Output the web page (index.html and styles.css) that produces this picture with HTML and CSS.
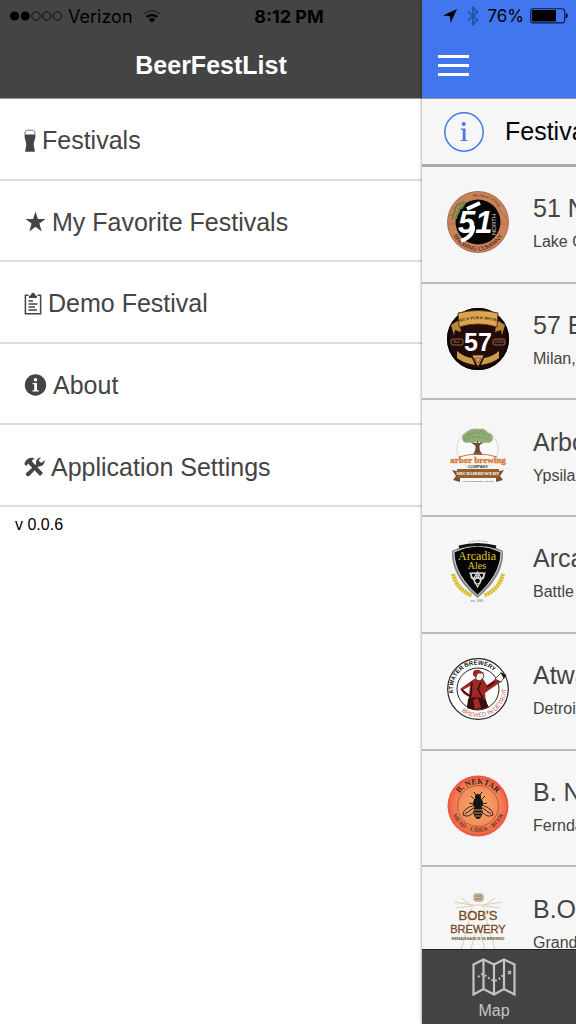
FILE: index.html
```
<!DOCTYPE html>
<html lang="en">
<head>
    <meta charset="utf-8">
    <meta name="viewport" content="width=device-width, initial-scale=1">
    <title>BeerFestList</title>
    <link rel="stylesheet" href="styles.css">
</head>

<body>
    <!-- status bar, lies over both headers -->
    <div class="status">
        <div class="status-left">
            <svg width="52" height="12" viewBox="0 0 52 12">
                <circle cx="4.500" cy="6" r="4.500"/>
                <circle cx="15.200" cy="6" r="4.500"/>
                <g fill="none" stroke="#000" stroke-width="0.800">
                    <circle cx="26" cy="6" r="4.200"/>
                    <circle cx="36.700" cy="6" r="4.200"/>
                    <circle cx="47.400" cy="6" r="4.200"/>
                </g>
            </svg>
            <span class="carrier">Verizon</span>
            <svg class="wifi" width="18" height="14" viewBox="0 0 18 14">
                <g fill="none" stroke="#000" stroke-width="2.300">
                    <path d="M1 5.200A11.500 11.500 0 0 1 17 5.200" opacity="0.350"/>
                    <path d="M3.800 8.200A7.600 7.600 0 0 1 14.200 8.200"/>
                </g>
                <path d="M9 13.800L5.700 10.400A4.800 4.800 0 0 1 12.300 10.400Z"/>
            </svg>
        </div>
        <div class="clock">8:12 PM</div>
        <div class="status-right">
            <svg width="14" height="14" viewBox="0 0 14 14"><path d="M14 0L7.600 14L7 7.200L0 6.400Z"/></svg>
            <svg class="bluetooth" width="12" height="20" viewBox="0 0 12 20"><path d="M1 5.500L10.500 14L6 18.500V1.500L10.500 6L1 14.500" fill="none" stroke="#234f9b" stroke-width="1.600"/></svg>
            <span class="percent">76%</span>
            <svg width="38" height="16" viewBox="0 0 38 16">
                <rect x="0.700" y="0.700" width="34" height="14.200" rx="2.500" fill="none" stroke="#0b1b40" stroke-width="1.100"/>
                <rect x="2" y="2" width="24" height="11.600" rx="1"/>
                <path d="M35.700 5C38.300 5.500 38.300 10 35.700 10.500Z"/>
            </svg>
        </div>
    </div>

    <div class="app">
        <!-- side menu -->
        <aside class="menu">
            <header class="bar bar-dark">
                <h1>BeerFestList</h1>
            </header>
            <nav class="menu-list">
                <a href="#festivals">
                    <svg width="12" height="24" viewBox="0 0 12 24">
                        <path d="M1 5.500C1 1 2 1.200 6 1.200S11 1 11 5.500" fill="none" stroke="#666" stroke-width="1"/>
                        <path d="M0.600 5.500H11.400C11.600 11 9.600 12.500 9.800 16C9.900 19 11 20.500 10.800 22.800H1.200C1 20.500 2.100 19 2.200 16C2.400 12.500 0.400 11 0.600 5.500Z"/>
                    </svg>
                    Festivals
                </a>
                <a href="#favorites">
                    <svg width="22" height="22" viewBox="0 0 22 22"><path d="M11.500 0.500L13.900 8H21.500L15.400 12.600L17.700 20.500L11.500 15.800L5.300 20.500L7.600 12.600L1.500 8H9.100Z"/></svg>
                    My Favorite Festivals
                </a>
                <a href="#demo">
                    <svg width="18" height="24" viewBox="0 0 18 24">
                        <path d="M4.500 3.200H1.400V21.800H16.600V3.200H13.500" fill="none" stroke="#444" stroke-width="1.500"/>
                        <path d="M5 6V4L7 3Q7 0.700 9 0.700T11 3L13 4V6Z"/>
                        <path d="M4.500 9H9M4.500 12H13.500M4.500 15H11M4.500 18H13" stroke="#444" stroke-width="1.400"/>
                    </svg>
                    Demo Festival
                </a>
                <a href="#about">
                    <svg width="23" height="23" viewBox="0 0 23 23">
                        <circle cx="11.500" cy="11" r="10.700"/>
                        <g fill="#fff"><circle cx="11.500" cy="5.700" r="1.800"/><path d="M8.500 9H13V16.200H14.800V17.500H8.500V16.200H10.200V10.200H8.500Z"/></g>
                    </svg>
                    About
                </a>
                <a href="#settings">
                    <svg width="21" height="22" viewBox="0 0 21 22">
                        <path d="M8.500 6L19 17L16 20L5.500 9L4 7.500L2.500 10L0.500 8.500C0.500 5 4 1.300 9 1.800L10.500 3L8 4.300Z"/>
                        <path d="M2 17.300L12 8.500C11.500 4.500 13.500 1.500 17 1.500L14.800 4L16 6.500L18.600 6.300L20.500 4C21.200 8 18 11 14.200 10.500L5 20.300C3 20.500 1.500 19 2 17.300Z"/>
                    </svg>
                    Application Settings
                </a>
            </nav>
            <p class="version">v 0.0.6</p>
        </aside>

        <!-- page pushed aside by the menu -->
        <main class="page">
            <header class="bar bar-blue">
                <button type="button" class="toggle" aria-label="Menu"><i></i><i></i><i></i></button>
            </header>

            <a class="info" href="#info">
                <svg width="40" height="40" viewBox="0 0 40 40">
                    <circle cx="20" cy="20" r="19.200" fill="none" stroke="#4276ee" stroke-width="1.500"/>
                    <g fill="#4276ee"><circle cx="19.700" cy="12" r="2"/><path d="M16.800 16.600H21.500V28H23.300V29H16.600V28H18.700V17.700H16.800Z"/></g>
                </svg>
                <span>Festival Information</span>
            </a>

            <div class="scroll">
                <ul class="breweries">
                    <li>
                        <svg class="logo" viewBox="0 0 62 62">
                            <circle cx="31" cy="31" r="30.500" fill="#ca8258" stroke="#95613f" stroke-width="0.800"/>
                            <path d="M2 25Q17 20 12 12M50 12Q53 23 60 27M1 33H8M54 33H61" fill="none" stroke="#ab6947" stroke-width="0.800"/>
                            <circle cx="31" cy="31" r="22.500" fill="#050505"/>
                            <path d="M5 29C7 24 5 23 8 20C6 17 10 16 11 13C14 15 14 10 18 12C15 15 17 17 12 18C14 21 9 22 9 28" fill="none" stroke="#678442" stroke-width="2"/>
                            <path id="a1" d="M4 39A28 28 0 0 0 58 39" fill="none"/>
                            <path id="a2" d="M26 6A25.500 25.500 0 0 1 56 25" fill="none"/>
                            <text class="sans" font-size="6" fill="#302018"><textPath href="#a1" startOffset="50%" text-anchor="middle">BREWING COMPANY</textPath></text>
                            <text class="serif italic" font-size="4" fill="#4b2d1c"><textPath href="#a2">Michigan’s Finest</textPath></text>
                            <path d="M26 35Q27 45 14 50" fill="none" stroke="#fff" stroke-width="4"/>
                            <path d="M20 18L33 12" stroke="#fff" stroke-width="4"/>
                            <text class="sans bold italic" x="11" y="42" font-size="31" fill="#fff">51</text>
                            <text class="sans" font-size="6" fill="#ddd" transform="translate(49 44) rotate(-90)">NORTH</text>
                        </svg>
                        <div><h2>51 North Brewing Company</h2><p>Lake Orion, MI</p></div>
                    </li>
                    <li>
                        <svg class="logo" viewBox="0 0 62 62">
                            <circle cx="31" cy="31" r="31" fill="#240b0b"/>
                            <circle cx="31" cy="31" r="30" fill="none" stroke="#080303" stroke-width="2"/>
                            <path d="M4 17L12 12L14 24L8 22L7 27ZM58 17L50 12L48 24L54 22L55 27Z" fill="#b98639"/>
                            <path d="M11 5Q31 0 51 5L50 19Q31 13 12 19Z" fill="#dba64f" stroke="#5f3513" stroke-width="1"/>
                            <path id="b1" d="M12 14Q31 8 51 14" fill="none"/>
                            <text class="serif bold" font-size="4" fill="#3b210d"><textPath href="#b1" startOffset="50%" text-anchor="middle">BREW PUB &amp; BISTRO</textPath></text>
                            <g fill="none" stroke="#936740" stroke-width="1"><rect x="4" y="31" width="12" height="6" rx="2"/><rect x="46" y="31" width="12" height="6" rx="2"/></g>
                            <text class="sans" x="10" y="35" font-size="4" fill="#b18452" text-anchor="middle">Est.</text>
                            <text class="sans" x="52" y="35" font-size="4" fill="#b18452" text-anchor="middle">2009</text>
                            <path d="M10 43Q17 49 25 50L28 57Q16 55 10 50ZM52 43Q45 49 37 50L34 57Q46 55 52 50Z" fill="#cc9b49"/>
                            <path d="M25 47H37L31 59Z" fill="#e0b165" stroke="#43210f" stroke-width="1"/>
                            <path d="M28 50H34L31 55Z" fill="none" stroke="#815024"/>
                            <text class="sans bold" x="31" y="43" font-size="25" fill="#fff" text-anchor="middle">57</text>
                        </svg>
                        <div><h2>57 Brew Pub &amp; Bistro</h2><p>Milan, MI</p></div>
                    </li>
                    <li>
                        <svg class="logo" viewBox="0 0 62 62">
                            <circle cx="30.500" cy="24" r="20.500" fill="#fafafa" stroke="#ccc" stroke-width="0.700"/>
                            <path d="M28 18H33Q31 25 36 30H25Q30 26 28 18Z" fill="#6b4932"/>
                            <path d="M29 20L22 15M31 20L39 15M30 21L31 12" fill="none" stroke="#6b4932" stroke-width="1.600"/>
                            <g fill="#92ad77"><ellipse cx="30" cy="10" rx="12" ry="6"/><circle cx="20" cy="13" r="5"/><circle cx="41" cy="13" r="5"/><circle cx="26" cy="8" r="4"/><circle cx="35" cy="8" r="4"/><ellipse cx="25" cy="15" rx="5" ry="3"/><ellipse cx="36" cy="15" rx="5" ry="3"/></g>
                            <g fill="none" stroke="#66834f" stroke-width="1.200" stroke-dasharray="1 2"><path d="M18 12Q30 4 43 12"/><path d="M17 15Q30 9 43 15"/><path d="M22 9Q30 3 38 8"/></g>
                            <path d="M12 32Q31 26 50 32" fill="none" stroke="#c9773b" stroke-width="1"/>
                            <text class="serif bold" x="31" y="38" font-size="9" fill="#d77b35" stroke="#d77b35" stroke-width="0.400" text-anchor="middle">arbor brewing</text>
                            <text class="sans bold" x="31" y="43" font-size="4" fill="#333" text-anchor="middle">COMPANY</text>
                            <path d="M5 45L13 47V57L6 55L9 51ZM57 45L49 47V57L56 55L53 51Z" fill="#795027"/>
                            <rect x="10" y="44" width="42" height="9" fill="#94612e"/>
                            <text class="serif bold" x="31" y="50" font-size="5" fill="#fff" text-anchor="middle">MICROBREWERY</text>
                            <text class="sans" x="31" y="57" font-size="2" fill="#444" text-anchor="middle">THE MICROBREWERY AND PUB</text>
                        </svg>
                        <div><h2>Arbor Brewing Company</h2><p>Ypsilanti, MI</p></div>
                    </li>
                    <li>
                        <svg class="logo" viewBox="0 0 62 62">
                            <path d="M22 1Q31 -1 41 1" fill="none" stroke="#aaa" stroke-width="1" stroke-dasharray="2 1"/>
                            <path d="M7 35Q10 49 25 55M55 35Q52 49 37 55" fill="none" stroke="#efe08c" stroke-width="4"/>
                            <g fill="none" stroke="#d5b933" stroke-width="4" stroke-dasharray="2 1"><path d="M6 33Q9 47 24 54"/><path d="M56 33Q53 47 38 54"/></g>
                            <path d="M5 10Q18 3 30.500 3T56 10C57 29 46 44 30.500 57C15 44 4 29 5 10Z" fill="#888"/>
                            <path d="M7 11Q19 5 30.500 5T54 11C54 28 44 42 30.500 54C17 42 7 28 7 11Z" fill="#050505" stroke="#fff" stroke-width="0.800"/>
                            <path d="M12 6Q31 1 49 6" fill="none" stroke="#111" stroke-width="3"/>
                            <text class="serif" x="30" y="19" font-size="12" fill="#e1c72e" text-anchor="middle">Arcadia</text>
                            <text class="serif" x="30" y="28" font-size="10" fill="#e1c72e" text-anchor="middle">Ales</text>
                            <g fill="none" stroke="#ddd" stroke-width="1.200"><path d="M23 32H38L30.500 46Z"/><path d="M27 37H34L30.500 31Z"/><circle cx="27" cy="35" r="3"/><circle cx="34" cy="35" r="3"/><circle cx="30.500" cy="40" r="3"/></g>
                            <text class="sans" x="30" y="61" font-size="3" fill="#666" text-anchor="middle">est. 1996</text>
                        </svg>
                        <div><h2>Arcadia Brewing Company</h2><p>Battle Creek, MI</p></div>
                    </li>
                    <li>
                        <svg class="logo" viewBox="0 0 62 62">
                            <circle cx="31" cy="31" r="30.300" fill="#fff" stroke="#222" stroke-width="1.200"/>
                            <circle cx="31" cy="31" r="21" fill="#fff" stroke="#222" stroke-width="1"/>
                            <path d="M20 50L22 39L17 36L13 31L20 26L27 21L36 21L40 27L50 20L54 24L42 32L38 35L39 44L42 49Q31 54 20 50Z" fill="#9e2824"/>
                            <path d="M22 37L16 32L23 28" fill="#fff"/>
                            <path d="M23 38L15 32M25 24L24 37L21 49M34 24L31 31L36 41M40 29L48 24" fill="none" stroke="#260d0c" stroke-width="1.400"/>
                            <path d="M21 41Q30 37 39 42L41 49Q30 54 20 50Z" fill="#35100f"/>
                            <path d="M26 42L31 40L34 50L28 51Z" fill="#a32b26"/>
                            <path d="M28 15H36L37 19L33 23L29 22Z" fill="#eee" stroke="#222" stroke-width="0.800"/>
                            <path d="M26 17Q25 11 32 12L37 15H31L29 20Z" fill="#a62421"/>
                            <path d="M48 21L54 15L59 17L54 24Z" fill="#fff" stroke="#222" stroke-width="0.800"/>
                            <path d="M53 14L59 17L57 21Z" fill="#2a1010"/>
                            <path id="c1" d="M9 42A23.500 23.500 0 0 1 51 19" fill="none"/>
                            <path id="c2" d="M14 53A28 28 0 0 0 59 27" fill="none"/>
                            <text class="sans bold" font-size="6" fill="#111"><textPath href="#c1" startOffset="50%" text-anchor="middle">ATWATER BREWERY</textPath></text>
                            <text class="sans" font-size="6" fill="#c75b53"><textPath href="#c2" startOffset="1%">BREWED IN DETROIT</textPath></text>
                        </svg>
                        <div><h2>Atwater Brewery</h2><p>Detroit, MI</p></div>
                    </li>
                    <li>
                        <svg class="logo" viewBox="0 0 62 62">
                            <defs><radialGradient id="amber"><stop offset="0" stop-color="#f7b06f"/><stop offset="0.700" stop-color="#f18c59"/><stop offset="1" stop-color="#ed6747"/></radialGradient></defs>
                            <circle cx="31" cy="31" r="30.500" fill="#eb5c43"/>
                            <circle cx="31" cy="31" r="28.500" fill="url(#amber)"/>
                            <circle cx="31" cy="31" r="20.500" fill="none" stroke="#a84d32" stroke-width="0.800"/>
                            <path d="M28 30Q16 33 16 40Q23 44 29 34ZM34 30Q46 33 46 40Q39 44 33 34Z" fill="#e99b68" stroke="#4c2519" stroke-width="1"/>
                            <path d="M28 32L18 39M34 32L44 39M28 25L24 21M34 25L38 21M27 29L22 28M35 29L40 28" stroke="#222" stroke-width="1"/>
                            <ellipse cx="31" cy="28" rx="5" ry="5" fill="#141414"/>
                            <circle cx="31" cy="22" r="3" fill="#141414"/>
                            <path d="M29 20L27 17M33 20L35 17" stroke="#222"/>
                            <ellipse cx="31" cy="37" rx="4.500" ry="7" fill="#171312"/>
                            <path d="M27 35H35M27 38H35M28 41H34" stroke="#d58d52" stroke-width="1"/>
                            <path id="d1" d="M12 19A23 23 0 0 1 50 19" fill="none"/>
                            <path id="d2" d="M6 40A27 27 0 0 0 56 40" fill="none"/>
                            <text class="serif bold" font-size="8" fill="#3e2018"><textPath href="#d1" startOffset="50%" text-anchor="middle">B. NEKTAR</textPath></text>
                            <text class="serif bold" font-size="6" fill="#6b2e20"><textPath href="#d2" startOffset="50%" text-anchor="middle">MEAD · CIDER · BEER</textPath></text>
                        </svg>
                        <div><h2>B. Nektar Meadery</h2><p>Ferndale, MI</p></div>
                    </li>
                    <li>
                        <svg class="logo" viewBox="0 0 62 62">
                            <g fill="none" stroke="#d9ceb8" stroke-width="1"><path d="M7 10L25 13H36L55 10M9 16L25 14M53 16L37 14M14 6L27 15M48 6L35 15"/><path d="M25 16L20 38L13 61M37 16L42 38L49 61M28 42L23 61M34 42L39 61"/></g>
                            <rect x="26" y="1" width="11" height="9" rx="4" fill="#c8b89e"/>
                            <path d="M28 4H35M28 7H35" stroke="#8b7356" stroke-width="1"/>
                            <text class="sans" x="31" y="28" font-size="13" fill="#77461f" stroke="#77461f" stroke-width="0.300" text-anchor="middle">BOB’S</text>
                            <text class="sans" x="31" y="41" font-size="11" fill="#77461f" stroke="#77461f" stroke-width="0.300" text-anchor="middle">BREWERY</text>
                            <text class="sans bold" x="31" y="48" font-size="4" fill="#665039" text-anchor="middle">RENAISSANCE IS BREWED</text>
                        </svg>
                        <div><h2>B.O.B.’s Brewery</h2><p>Grand Rapids, MI</p></div>
                    </li>
                </ul>
            </div>

            <footer class="tabs">
                <a href="#map">
                    <svg width="44" height="38" viewBox="0 0 44 38">
                        <path d="M1.500 6.500L11.500 1.500L22 6.500L32 1.500L42.500 6.500V36.500L32 31L22 36.500L11.500 31L1.500 36.500ZM11.500 1.500V31M22 6.500V36.500M32 1.500V31" fill="none" stroke="#c4c4c4" stroke-width="2.200"/>
                        <path d="M6 19L10 16L14 18L18 21L22 23L26 22L29 19L32 16" fill="none" stroke="#c4c4c4" stroke-width="1.800" stroke-dasharray="2 2"/>
                        <path d="M36 13L39 16M39 13L36 16" stroke="#c4c4c4" stroke-width="1.500"/>
                    </svg>
                    Map
                </a>
            </footer>
        </main>
    </div>
</body>
</html>
```
FILE: styles.css
```
* {
    box-sizing: border-box;
}

body {
    margin: 0;
    background: #fff;
    font-family: "Liberation Sans", Arial, sans-serif;
    color: #444;
}

h1, h2, p, ul {
    margin: 0;
    padding: 0;
    font-weight: normal;
}

a {
    color: inherit;
    text-decoration: none;
}

svg {
    flex: none;
    display: block;
}

/* status bar */
.status {
    position: absolute;
    top: 0;
    left: 0;
    right: 0;
    z-index: 2;
    height: 32px;
    padding: 0 8px 0 10px;
    display: grid;
    grid-template-columns: 1fr auto 1fr;
    align-items: center;
    font-family: Inter, sans-serif;
    font-size: 18px;
    color: #000;
}

.status-left, .status-right {
    display: flex;
    align-items: center;
    gap: 6px;
}

.status-right {
    justify-content: flex-end;
}

.wifi {
    margin-left: 4px;
}

.clock {
    font-weight: 700;
}

.bluetooth {
    margin: 0 2px 0 4px;
}

.percent {
    font-size: 17px;
}

/* layout */
.app {
    display: flex;
    height: 100vh;
    overflow: hidden;
}

.menu {
    flex: 1;
    min-width: 0;
}

.page {
    width: 154px;
    display: flex;
    flex-direction: column;
    overflow: hidden;
    background: #f6f6f6;
    box-shadow: 0 0 3px rgba(0, 0, 0, 0.5);
}

/* headers */
.bar {
    flex: none;
    height: 99px;
    padding: 32px 16px 0;
    display: flex;
    align-items: center;
    border-bottom: 1px solid #999;
    color: #fff;
}

.bar-dark {
    justify-content: center;
    background: #444;
}

.bar-blue {
    background: #4276ee;
}

.bar h1 {
    font-size: 25px;
    font-weight: bold;
}

.toggle {
    width: 31px;
    padding: 0;
    border: 0;
    background: none;
    display: flex;
    flex-direction: column;
    gap: 6px;
    cursor: pointer;
}

.toggle i {
    height: 3px;
    background: #fff;
}

/* side menu */
.menu-list {
    min-height: 408px;
    display: grid;
    grid-template-rows: repeat(5, 1fr);
}

.menu-list a {
    display: flex;
    align-items: center;
    gap: 6px;
    padding: 4px 24px 0;
    border-bottom: 2px solid #ddd;
    font-size: 25px;
    white-space: nowrap;
}

.menu-list svg {
    fill: #444;
}

.version {
    padding: 8px 15px;
    font-size: 16px;
    line-height: 20px;
    color: #000;
}

/* brewery list */
.info {
    flex: none;
    height: 68px;
    padding-left: 22px;
    display: flex;
    align-items: center;
    gap: 21px;
    border-bottom: 3px solid #aaa;
    font-size: 25px;
    color: #000;
    white-space: nowrap;
}

.scroll {
    flex: 1;
    min-height: 0;
    overflow: hidden;
}

.breweries {
    min-height: 817px;
    display: grid;
    grid-template-rows: repeat(7, 1fr);
    list-style: none;
}

.breweries li {
    display: flex;
    align-items: center;
    gap: 24px;
    padding: 0 0 4px 25px;
    border-bottom: 2px solid #bbb;
    white-space: nowrap;
}

.breweries h2 {
    font-size: 25px;
    line-height: 40px;
}

.breweries p {
    font-size: 16px;
    line-height: 28px;
}

.logo {
    width: 62px;
    height: 62px;
    overflow: visible;
}

.sans {
    font-family: "Liberation Sans", Arial, sans-serif;
}

.serif {
    font-family: "Liberation Serif", serif;
}

.bold {
    font-weight: bold;
}

.italic {
    font-style: italic;
}

/* bottom tabs */
.tabs {
    flex: none;
    height: 75px;
    background: #444;
    border-top: 1px solid #222;
}

.tabs a {
    width: 144px;
    padding-top: 8px;
    display: flex;
    flex-direction: column;
    align-items: center;
    gap: 6px;
    font-size: 16px;
    color: #c4c4c4;
}
```
